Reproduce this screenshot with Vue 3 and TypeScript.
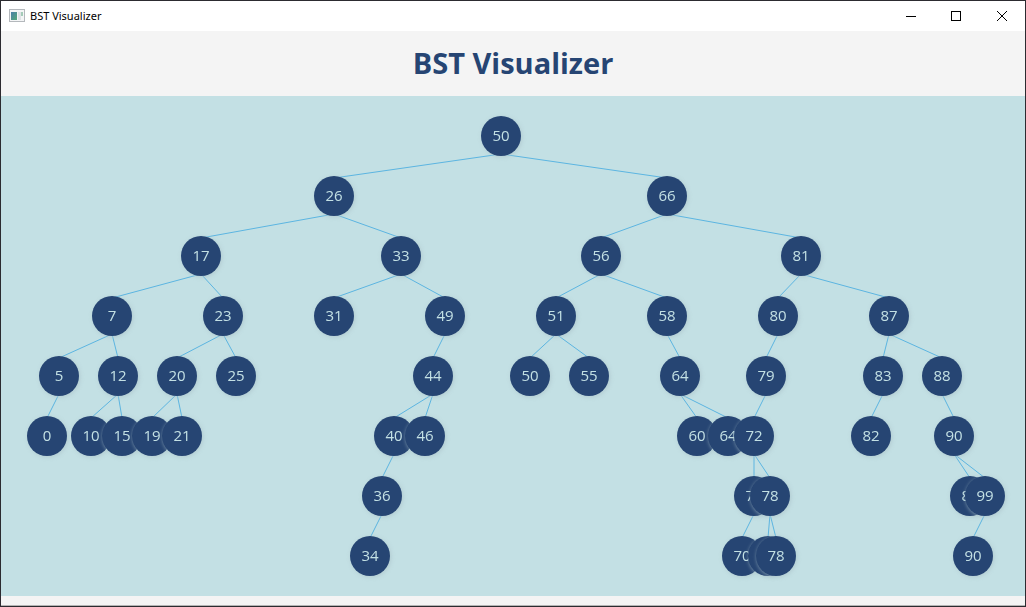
<script setup lang="ts">
interface TreeNode {
  id: number
  x: number
  level: number
  label: string
  parent: number | null
}

const rows: [number, number, number, string, number | null][] = [
  [1, 500, 0, '50', null],
  [2, 333, 1, '26', 1],
  [3, 666, 1, '66', 1],
  [4, 200, 2, '17', 2],
  [5, 400, 2, '33', 2],
  [6, 600, 2, '56', 3],
  [7, 800, 2, '81', 3],
  [8, 111, 3, '7', 4],
  [9, 222, 3, '23', 4],
  [10, 333, 3, '31', 5],
  [11, 444, 3, '49', 5],
  [12, 555, 3, '51', 6],
  [13, 666, 3, '58', 6],
  [14, 777, 3, '80', 7],
  [15, 888, 3, '87', 7],
  [16, 58, 4, '5', 8],
  [17, 117, 4, '12', 8],
  [18, 176, 4, '20', 9],
  [19, 235, 4, '25', 9],
  [20, 432, 4, '44', 11],
  [21, 529, 4, '50', 12],
  [22, 588, 4, '55', 12],
  [23, 679, 4, '64', 13],
  [24, 765, 4, '79', 14],
  [25, 882, 4, '83', 15],
  [26, 941, 4, '88', 15],
  [27, 46, 5, '0', 16],
  [28, 90, 5, '10', 17],
  [29, 121, 5, '15', 17],
  [30, 151, 5, '19', 18],
  [31, 181, 5, '21', 18],
  [32, 393, 5, '40', 20],
  [33, 424, 5, '46', 20],
  [34, 696, 5, '60', 23],
  [35, 727, 5, '64', 23],
  [36, 753, 5, '72', 24],
  [37, 870, 5, '82', 25],
  [38, 953, 5, '90', 26],
  [39, 381, 6, '36', 32],
  [40, 753, 6, '71', 36],
  [41, 769, 6, '78', 36],
  [42, 969, 6, '89', 38],
  [43, 984, 6, '99', 38],
  [44, 369, 7, '34', 39],
  [45, 741, 7, '70', 40],
  [46, 767, 7, '', 41],
  [47, 775, 7, '78', 41],
  [48, 972, 7, '90', 43],
]

const nodes: TreeNode[] = rows.map(([id, x, level, label, parent]) => ({ id, x, level, label, parent }))
const byId = new Map(nodes.map((n) => [n.id, n]))
const centerY = (level: number): number => 40 + level * 60

const edges = nodes.flatMap((n) => {
  const p = n.parent === null ? undefined : byId.get(n.parent)
  return p ? [{ id: n.id, x1: p.x, y1: centerY(p.level) + 18, x2: n.x, y2: centerY(n.level) - 18 }] : []
})
</script>

<template>
  <div class="window">
    <header class="titlebar">
      <svg class="app-icon" width="16" height="14" viewBox="0 0 16 14" aria-hidden="true">
        <defs>
          <linearGradient id="pane" x1="0" y1="0" x2="1" y2="1">
            <stop offset="0" stop-color="#4a7fa8" />
            <stop offset="1" stop-color="#55a878" />
          </linearGradient>
        </defs>
        <rect x="0.5" y="0.5" width="15" height="12" fill="#f4f5f6" stroke="#b4b8bc" />
        <rect x="2" y="3" width="6" height="8" fill="url(#pane)" />
        <rect x="9" y="3" width="3" height="8" fill="#dfe3e6" />
        <rect x="12" y="3" width="2" height="4" fill="#a4cbb8" />
      </svg>
      <span class="caption">BST Visualizer</span>
      <div class="controls">
        <button type="button" class="minimize" aria-label="Minimize">
          <svg width="10" height="10" viewBox="0 0 10 10" shape-rendering="crispEdges"><path d="M0 5.5H10" /></svg>
        </button>
        <button type="button" aria-label="Maximize">
          <svg width="10" height="10" viewBox="0 0 10 10" shape-rendering="crispEdges"><path d="M.5 .5H9.5V9.5H.5Z" /></svg>
        </button>
        <button type="button" aria-label="Close">
          <svg width="10" height="10" viewBox="0 0 10 10"><path d="M0 0L10 10M10 0L0 10" /></svg>
        </button>
      </div>
    </header>
    <h1>BST Visualizer</h1>
    <main>
      <svg class="tree" viewBox="0 0 1024 500" role="img" aria-label="Binary search tree">
        <line v-for="e in edges" :key="e.id" class="edge" :x1="e.x1" :y1="e.y1" :x2="e.x2" :y2="e.y2" />
        <g v-for="n in nodes" :key="n.id" class="node">
          <circle :cx="n.x" :cy="centerY(n.level)" r="20" />
          <text v-if="n.label" :x="n.x" :y="centerY(n.level) + 5">{{ n.label }}</text>
        </g>
      </svg>
    </main>
    <footer></footer>
  </div>
</template>

<style>
body {
  margin: 0;
}
</style>

<style scoped>
.window {
  box-sizing: border-box;
  min-height: 100vh;
  display: flex;
  flex-direction: column;
  border: 1px solid #2c2b30;
  background: #f4f4f4;
  font-family: 'Open Sans', 'Noto Sans', sans-serif;
}
.titlebar {
  display: flex;
  align-items: center;
  height: 30px;
  padding-left: 8px;
  background: #fff;
}
.caption {
  margin-left: 5px;
  font-family: 'Noto Sans', 'Open Sans', sans-serif;
  font-size: 11px;
  line-height: 16px;
  color: #000;
}
.controls {
  display: flex;
  margin-left: auto;
}
.controls button {
  display: flex;
  align-items: center;
  justify-content: center;
  width: 46px;
  height: 30px;
  padding: 0;
  border: 0;
  background: transparent;
}
.controls .minimize {
  width: 44px;
}
.controls path {
  fill: none;
  stroke: #000;
  stroke-width: 1;
}
h1 {
  margin: 0;
  height: 65px;
  font-size: 29px;
  line-height: 64px;
  font-weight: 700;
  text-align: center;
  color: #264573;
}
main {
  background: #c3e0e4;
}
.tree {
  display: block;
  width: 100%;
  height: auto;
}
.edge {
  stroke: #5cb5e1;
  stroke-width: 1;
}
.node {
  filter: drop-shadow(1px 1px 2px rgba(172, 196, 202, 0.8));
}
.node circle {
  fill: #264573;
}
.node text {
  fill: #c3e0e4;
  font-size: 15px;
  text-anchor: middle;
}
footer {
  flex: 1;
  min-height: 8px;
  border-bottom: 1px solid #b4b4b4;
}
</style>
